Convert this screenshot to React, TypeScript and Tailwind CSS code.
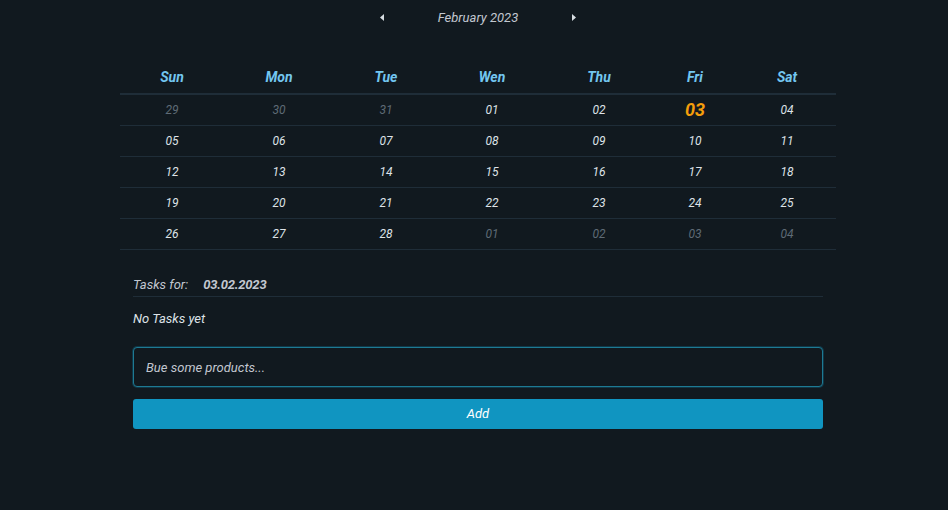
import { useState } from 'react';

const days = ['Sun', 'Mon', 'Tue', 'Wen', 'Thu', 'Fri', 'Sat'];

const weeks = [
  [['29', 0], ['30', 0], ['31', 0], ['01', 1], ['02', 1], ['03', 2], ['04', 1]],
  [['05', 1], ['06', 1], ['07', 1], ['08', 1], ['09', 1], ['10', 1], ['11', 1]],
  [['12', 1], ['13', 1], ['14', 1], ['15', 1], ['16', 1], ['17', 1], ['18', 1]],
  [['19', 1], ['20', 1], ['21', 1], ['22', 1], ['23', 1], ['24', 1], ['25', 1]],
  [['26', 1], ['27', 1], ['28', 1], ['01', 0], ['02', 0], ['03', 0], ['04', 0]],
] as [string, number][][];

const cols = 'grid grid-cols-[104px_110px_104px_108px_106px_86px_98px]';

export default function App() {
  const [task, setTask] = useState('Bue some products...');

  return (
    <div className="min-h-[510px] w-full bg-[#11191f] font-['Roboto',sans-serif] italic text-[#c2c7d0]">
      {/* Month nav */}
      <div className="flex items-center justify-center pt-[9px] h-[26px] pl-[8px]">
        <button className="w-[20px] flex justify-center">
          <svg width="4" height="7" viewBox="0 0 4 7"><path d="M4 0 L0 3.5 L4 7 Z" fill="#d7dde2" /></svg>
        </button>
        <div className="w-[172px] text-center text-[13px] leading-[17px] text-[#c2c7d0]">February 2023</div>
        <button className="w-[20px] flex justify-center">
          <svg width="4" height="7" viewBox="0 0 4 7"><path d="M0 0 L4 3.5 L0 7 Z" fill="#d7dde2" /></svg>
        </button>
      </div>

      {/* Calendar */}
      <div className="ml-[120px] w-[716px] mt-[35px]">
        <div className={`${cols} h-[34px] items-center border-b-2 border-[#1f2d38]`}>
          {days.map(d => (
            <div key={d} className="text-center text-[14px] font-bold text-[#73c6ef]">{d}</div>
          ))}
        </div>
        {weeks.map((w, i) => (
          <div key={i} className={`${cols} h-[31px] items-center border-b border-[#1f2d38]`}>
            {w.map(([n, s], j) => (
              <div
                key={j}
                className={
                  s === 2
                    ? 'text-center text-[18px] font-bold text-[#f59e0b] leading-[20px]'
                    : s === 1
                    ? 'text-center text-[12px] text-[#dfe3e8]'
                    : 'text-center text-[12px] text-[#5f6b76]'
                }
              >
                {n}
              </div>
            ))}
          </div>
        ))}
      </div>

      {/* Tasks */}
      <div className="ml-[133px] w-[690px] mt-[25px]">
        <div className="flex items-center gap-[15px] pb-[1px] border-b border-[#1f2d38] h-[22px]">
          <span className="text-[13px] text-[#c2c7d0]">Tasks for:</span>
          <span className="text-[13px] font-bold text-[#c2c7d0] tracking-[-0.2px]">03.02.2023</span>
        </div>
        <p className="text-[13px] text-[#dfe3e8] mt-[14px] leading-[16px]">No Tasks yet</p>

        <input
          value={task}
          onChange={e => setTask(e.target.value)}
          className="mt-[20px] block w-full h-[40px] rounded-[4px] border border-[#1e7a93] bg-[#11191f] px-[12px] text-[13px] italic text-[#c2c7d0] outline-none shadow-[0_0_0_1px_rgba(16,149,193,0.25)]"
        />
        <button className="mt-[12px] block w-full h-[30px] rounded-[3px] bg-[#1095c1] text-[13px] italic text-white">
          Add
        </button>
      </div>
    </div>
  );
}
